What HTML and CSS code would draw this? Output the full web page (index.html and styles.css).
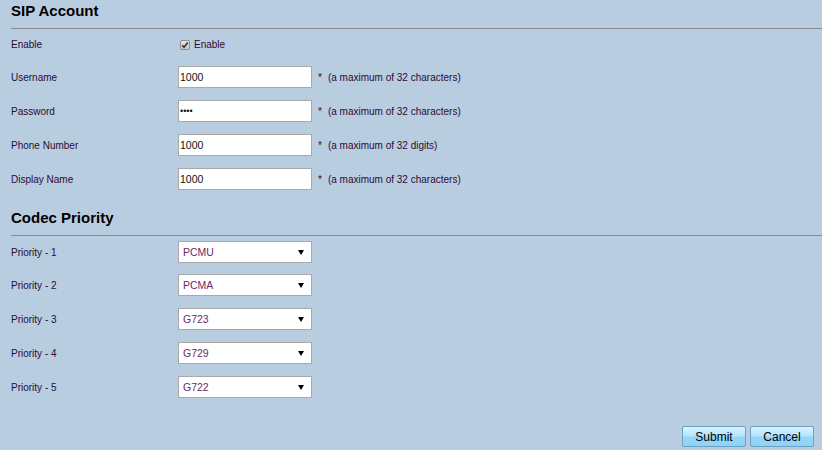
FILE: index.html
```html
<!DOCTYPE html>
<html>
<head>
<meta charset="utf-8">
<link rel="stylesheet" href="styles.css">
</head>
<body>
<div class="page">
  <h2 class="section-title">SIP Account</h2>
  <div class="row row-first">
    <span class="label">Enable</span>
    <span class="check"><span class="box"><svg width="8" height="8" viewBox="0 0 8 8"><path d="M1.2 4.2 L3 6.3 L6.8 1.5" fill="none" stroke="#333" stroke-width="1.6"/></svg></span>Enable</span>
  </div>
  <div class="row">
    <span class="label">Username</span>
    <input class="field" type="text" value="1000">
    <span class="note"><span class="star">*</span>(a maximum of 32 characters)</span>
  </div>
  <div class="row">
    <span class="label">Password</span>
    <input class="field pw" type="password" value="1000">
    <span class="note"><span class="star">*</span>(a maximum of 32 characters)</span>
  </div>
  <div class="row">
    <span class="label">Phone Number</span>
    <input class="field" type="text" value="1000">
    <span class="note"><span class="star">*</span>(a maximum of 32 digits)</span>
  </div>
  <div class="row">
    <span class="label">Display Name</span>
    <input class="field" type="text" value="1000">
    <span class="note"><span class="star">*</span>(a maximum of 32 characters)</span>
  </div>

  <h2 class="section-title codec">Codec Priority</h2>
  <div class="row prow-first">
    <span class="label">Priority - 1</span>
    <span class="select"><span class="val">PCMU</span><span class="arrow"></span></span>
  </div>
  <div class="row">
    <span class="label">Priority - 2</span>
    <span class="select"><span class="val">PCMA</span><span class="arrow"></span></span>
  </div>
  <div class="row">
    <span class="label">Priority - 3</span>
    <span class="select"><span class="val">G723</span><span class="arrow"></span></span>
  </div>
  <div class="row">
    <span class="label">Priority - 4</span>
    <span class="select"><span class="val">G729</span><span class="arrow"></span></span>
  </div>
  <div class="row">
    <span class="label">Priority - 5</span>
    <span class="select"><span class="val">G722</span><span class="arrow"></span></span>
  </div>

  <div class="actions">
    <button class="btn">Submit</button>
    <button class="btn">Cancel</button>
  </div>
</div>
</body>
</html>
```

FILE: styles.css
```css
html, body {
  margin: 0;
  padding: 0;
  background: #b9cde1;
}
body {
  font-family: "Liberation Sans", Arial, sans-serif;
  font-size: 10px;
  color: #2e0a30;
  width: 822px;
  height: 450px;
  overflow: hidden;
}
.page {
  padding-left: 11px;
}
.section-title {
  margin: 0;
  box-sizing: border-box;
  height: 29px;
  padding-top: 2px;
  font-size: 15px;
  line-height: 18px;
  font-weight: bold;
  color: #000;
  border-bottom: 1px solid #8a8d92;
}
.section-title.codec {
  margin-top: 11px;
}
.row {
  display: flex;
  align-items: center;
  height: 34px;
}
.row-first {
  height: 31px;
}
.prow-first {
  height: 32px;
}
.label {
  width: 167px;
  flex: none;
}
.check {
  display: flex;
  align-items: center;
  margin-left: 2px;
}
.box {
  box-sizing: border-box;
  width: 10px;
  height: 10px;
  border: 1px solid #8f8f8f;
  border-radius: 2px;
  background: linear-gradient(#e6e6e6, #c9c9c9);
  display: flex;
  align-items: center;
  justify-content: center;
  margin-right: 4px;
}
.box svg {
  display: block;
}
.field {
  box-sizing: border-box;
  width: 134px;
  height: 22px;
  margin: 0;
  padding: 0 1px;
  border: 1px solid #a9a9a9;
  background: #fff;
  font-family: "Liberation Sans", Arial, sans-serif;
  font-size: 10.5px;
  color: #111;
  outline: none;
}
.field.pw {
  font-size: 9px;
}
.note {
  margin-left: 6px;
}
.star {
  margin-right: 6px;
}
.select {
  box-sizing: border-box;
  width: 134px;
  height: 22px;
  border: 1px solid #a9a9a9;
  background: #fff;
  display: flex;
  align-items: center;
  justify-content: space-between;
  padding: 0 7px 0 4px;
  color: #6a2a6a;
  font-size: 10.5px;
}
.arrow {
  width: 0;
  height: 0;
  border-left: 3px solid transparent;
  border-right: 3px solid transparent;
  border-top: 5px solid #000;
}
.actions {
  display: flex;
  justify-content: flex-end;
  gap: 4px;
  margin-top: 22px;
  padding-right: 8px;
}
.btn {
  box-sizing: border-box;
  width: 64px;
  height: 21px;
  margin: 0;
  padding: 0;
  border: 1px solid #6c9fc3;
  border-radius: 2px;
  background: linear-gradient(#d9f3ff 0%, #b5e5fc 45%, #95d6f8 55%, #8fd3f7 100%);
  font-family: "Liberation Sans", Arial, sans-serif;
  font-size: 12px;
  color: #000;
}
```
